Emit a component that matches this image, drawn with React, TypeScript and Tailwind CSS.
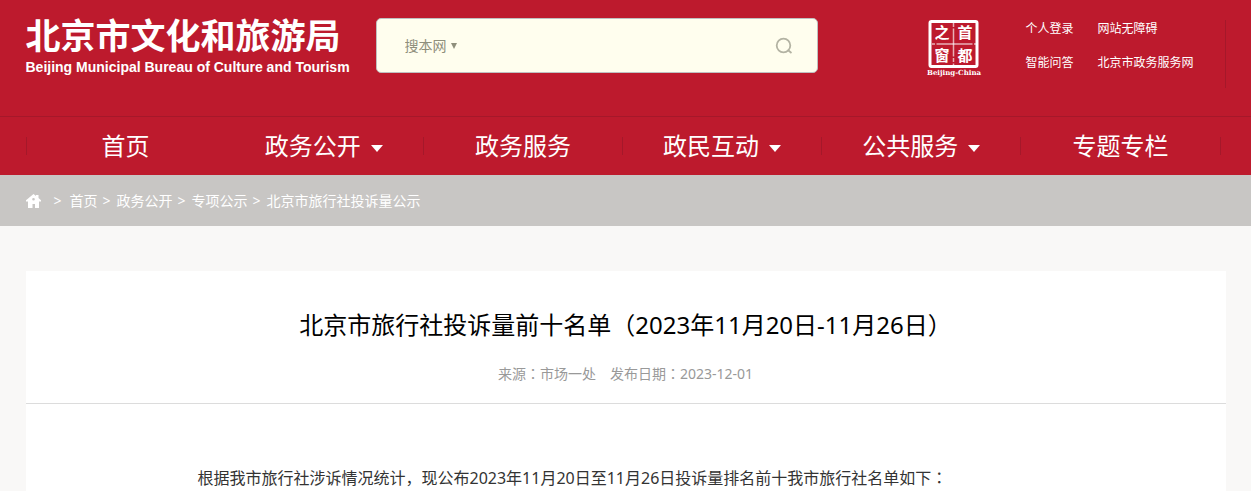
import type { ReactNode } from "react";

const quickLinks = ["个人登录", "网站无障碍", "智能问答", "北京市政务服务网"];

const navItems = [
  { label: "首页", hasMenu: false, divider: false },
  { label: "政务公开", hasMenu: true, divider: true },
  { label: "政务服务", hasMenu: false, divider: true },
  { label: "政民互动", hasMenu: true, divider: true },
  { label: "公共服务", hasMenu: true, divider: true },
  { label: "专题专栏", hasMenu: false, divider: true },
];

const crumbs = ["首页", "政务公开", "专项公示", "北京市旅行社投诉量公示"];

// Full-width punctuation centred in its cell
function Mark({ children }: { children: ReactNode }) {
  return <span className="font-['Noto_Sans_CJK_TC',sans-serif] leading-none">{children}</span>;
}

function CapitalWindowLogo() {
  return (
    <svg width="56" height="58" viewBox="0 0 56 58" role="img" aria-label="首都之窗">
      <rect x="4" y="1.5" width="47" height="45" rx="1.5" fill="none" stroke="#fff" strokeWidth="3" />
      <path d="M6 24H50" stroke="#fff" strokeWidth="1.5" strokeOpacity="0.65" strokeDasharray="3 1.5 36 1.5" />
      <path d="M27.5 3V46" stroke="#fff" strokeWidth="1.5" strokeOpacity="0.65" strokeDasharray="4 1.5 28 1.5" />
      <g
        fill="#fff"
        fontFamily="'Noto Sans CJK SC', sans-serif"
        fontSize="15"
        fontWeight="700"
        textAnchor="middle"
      >
        <text x="16" y="18">之</text>
        <text x="39" y="18">首</text>
        <text x="16" y="41">窗</text>
        <text x="39" y="41">都</text>
      </g>
      <text
        x="28"
        y="55"
        fill="#fff"
        fontFamily="'DejaVu Serif', serif"
        fontSize="7"
        fontWeight="700"
        textAnchor="middle"
      >
        Beijing-China
      </text>
    </svg>
  );
}

function Header() {
  return (
    <header className="border-b border-[#a5182a]">
      <div className="mx-auto flex h-[116px] max-w-[1200px] items-start">
        <a href="#" className="mt-[15px] block w-[350px] shrink-0 text-white">
          <span className="block text-[35px] font-bold leading-[42px]">北京市文化和旅游局</span>
          <span className="block whitespace-nowrap font-['Liberation_Sans',Arial,sans-serif] text-sm font-bold leading-5">
            Beijing Municipal Bureau of Culture and Tourism
          </span>
        </a>

        {/* Search */}
        <form className="mt-[18px] flex h-[55px] w-[442px] items-center rounded-[5px] border border-[#bfc0c0] bg-[#fffeee] pl-7 pr-6 text-sm text-[#8f8f7c]">
          <label className="flex items-center">
            <select aria-label="搜索范围" className="w-[46px] appearance-none bg-transparent outline-none">
              <option>搜本网</option>
            </select>
            <svg width="6" height="6" viewBox="0 0 6 6" fill="currentColor" aria-hidden="true">
              <path d="M0 0H6L3 6Z" />
            </svg>
          </label>
          <input type="text" aria-label="搜索" className="mx-3 h-10 min-w-0 flex-1 bg-transparent outline-none" />
          <button type="button" aria-label="搜索" className="text-[#b3b3a3]">
            <svg width="18" height="18" viewBox="0 0 18 18" fill="none" stroke="currentColor" strokeWidth="1.8">
              <circle cx="8.5" cy="8.5" r="6.8" />
              <path d="M12.6 12.8L16.5 16" />
            </svg>
          </button>
        </form>

        {/* Links */}
        <div className="ml-auto mt-5 flex h-[68px] border-r border-[#a5182a] pr-[30px]">
          <a href="#" className="mr-11">
            <CapitalWindowLogo />
          </a>
          <ul className="-mt-2 grid grid-cols-[72px_97px] content-start text-xs leading-[34px] text-white">
            {quickLinks.map((link) => (
              <li key={link} className="whitespace-nowrap">
                <a href="#">{link}</a>
              </li>
            ))}
          </ul>
        </div>
      </div>
    </header>
  );
}

function Navbar() {
  return (
    <nav>
      <ul className="mx-auto grid h-[58px] max-w-[1200px] grid-cols-6 items-center pr-[5px]">
        {navItems.map((item, i) => (
          <li
            key={item.label}
            className={`flex h-[18px] items-center justify-center ${i === 0 ? "border-l" : ""} ${
              item.divider ? "border-r" : ""
            } border-[#a5182a]`}
          >
            <a href="#" className="flex items-center gap-2.5 text-2xl text-white">
              {item.label}
              {item.hasMenu && (
                <svg width="12" height="7" viewBox="0 0 12 7" fill="currentColor" className="mt-1" aria-hidden="true">
                  <path d="M0 0H12L6 7Z" />
                </svg>
              )}
            </a>
          </li>
        ))}
      </ul>
    </nav>
  );
}

function Breadcrumb() {
  return (
    <div className="bg-[#c8c6c4]">
      <ol className="mx-auto flex h-[51px] max-w-[1200px] items-center text-sm text-white">
        <li className="mr-[7px]">
          <a href="#" aria-label="首页">
            <svg width="15" height="14" viewBox="0 0 15 14" fill="currentColor">
              <path
                fillRule="evenodd"
                d="M7.5 0L10 2V1H12.5V4L15 6.3V7.5H13V14H9V10H6.5V14H2V7.5H0V6.3ZM7.5 4A1.3 1.3 0 1 0 7.5 6.6A1.3 1.3 0 1 0 7.5 4Z"
              />
            </svg>
          </a>
        </li>
        {crumbs.map((crumb, i) => (
          <li key={crumb} className="flex">
            <span className={i === 0 ? "ml-1.5 mr-2" : "ml-[5px] mr-1.5"}>&gt;</span>
            <a href="#">{crumb}</a>
          </li>
        ))}
      </ol>
    </div>
  );
}

function Article() {
  return (
    <main className="mx-auto mt-[45px] max-w-[1200px] bg-white">
      <div className="border-b border-[#dcdcdc] pb-4 pt-9 text-center">
        <h1 className="text-2xl leading-9 text-black">
          北京市旅行社投诉量前十名单（2023年11月20日-11月26日）
        </h1>
        <p className="mt-[18px] flex justify-center gap-3.5 text-sm leading-[26px] text-[#999]">
          <span>
            来源<Mark>：</Mark>市场一处
          </span>
          <span>
            发布日期<Mark>：</Mark>2023-12-01
          </span>
        </p>
      </div>
      <p className="px-[140px] pb-10 pt-[58px] indent-8 text-base leading-8 text-[#333]">
        根据我市旅行社涉诉情况统计，现公布2023年11月20日至11月26日投诉量排名前十我市旅行社名单如下<Mark>：</Mark>
      </p>
    </main>
  );
}

export default function App() {
  return (
    <div className="h-screen overflow-hidden bg-[#f9f8f7] font-['Noto_Sans','Noto_Sans_CJK_SC',sans-serif]">
      <div className="bg-[#bd1a2d]">
        <Header />
        <Navbar />
      </div>
      <Breadcrumb />
      <Article />
    </div>
  );
}
